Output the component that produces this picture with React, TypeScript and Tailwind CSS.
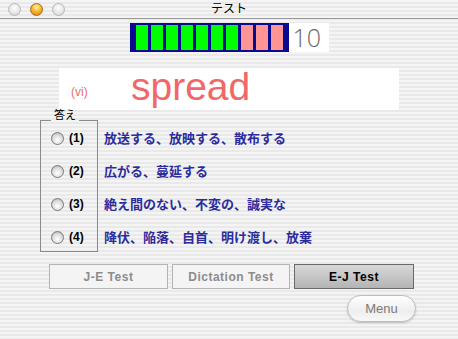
import React from 'react';

const stripes =
    'bg-[repeating-linear-gradient(180deg,#f4f4f4_0px,#f4f4f4_2px,#e9e9e9_2px,#e9e9e9_4px)]';

const answers = [
    '放送する、放映する、散布する',
    '広がる、蔓延する',
    '絶え間のない、不変の、誠実な',
    '降伏、陥落、自首、明け渡し、放棄',
];

function Light({ active }: { active?: boolean }) {
    return (
        <div
            className={
                active
                    ? 'w-[13px] h-[13px] rounded-full border border-[#b06a10] bg-[radial-gradient(circle_at_50%_30%,#fff3b0_0%,#f8b830_45%,#d87a10_100%)]'
                    : 'w-[13px] h-[13px] rounded-full border border-[#b8b8b8] bg-[radial-gradient(circle_at_50%_35%,#ffffff_0%,#e4e4e4_60%,#cfcfcf_100%)]'
            }
        />
    );
}

function Radio() {
    return (
        <div className="w-[13px] h-[13px] rounded-full border border-[#7a7a7a] bg-[radial-gradient(circle_at_50%_65%,#ffffff_0%,#dcdcdc_55%,#a8a8a8_100%)]" />
    );
}

export default function App() {
    const score = 7;
    return (
        <div className={`w-[458px] h-[339px] overflow-hidden ${stripes}`} style={{ fontFamily: '"Liberation Sans", "Noto Sans CJK JP", sans-serif' }}>
            {/* title bar */}
            <div className="relative h-[19px] border-b border-[#9a9a9a] flex items-center">
                <div className="flex items-center gap-[9px] pl-[8px]">
                    <Light />
                    <Light active />
                    <Light />
                </div>
                <div className="absolute inset-0 flex items-center justify-center text-[12px] text-black">
                    テスト
                </div>
            </div>

            {/* progress */}
            <div className="mt-[4px] flex justify-center">
                <div className="flex h-[29px] w-[159px] gap-[3px] bg-[#0a0a90] pl-[6px] py-[2px]">
                    {Array.from({ length: 10 }).map((_, i) => (
                        <div key={i} className={`w-[12px] h-full ${i < score ? 'bg-[#00ff00]' : 'bg-[#ff9494]'}`} />
                    ))}
                </div>
                <div className="w-[40px] h-[29px] bg-white text-[#6a6a6a] text-[25px] leading-[29px] pl-[4px]" style={{ fontFamily: '"Open Sans", sans-serif', fontWeight: 300 }}>
                    10
                </div>
            </div>

            {/* word */}
            <div className="mx-auto mt-[16px] w-[340px] h-[42px] bg-white flex items-center">
                <div className="ml-[12px] w-[60px] text-[12px] text-[#e87070] pt-[6px]">(vi)</div>
                <div className="text-[39px] leading-[42px] text-[#f06868] -mt-[4px]">spread</div>
            </div>

            {/* answers */}
            <div className="flex items-start pl-[40px]">
                <div className="w-[58px]">
                    <div className="flex items-end h-[11px]">
                        <div className="w-[11px] h-full border-b border-[#8a8a8a]" />
                        <div className="text-[11px] leading-[11px] px-[3px] text-black">答え</div>
                        <div className="flex-1 h-full border-b border-[#8a8a8a]" />
                    </div>
                    <div className="border-x border-b border-[#8a8a8a] pt-[6px] pb-[3px] flex flex-col gap-[11px]">
                        {answers.map((_, i) => (
                            <div key={i} className="h-[22px] flex items-center pl-[10px] gap-[5px]">
                                <Radio />
                                <span className="text-[12px] font-bold text-black">({i + 1})</span>
                            </div>
                        ))}
                    </div>
                </div>
                <div className="pl-[6px] pt-[17px] flex flex-col gap-[11px]">
                    {answers.map((a, i) => (
                        <div key={i} className="h-[22px] flex items-center text-[13px] font-bold text-[#2c2c9c]" style={{ fontFamily: '"Noto Sans CJK JP", sans-serif' }}>
                            {a}
                        </div>
                    ))}
                </div>
            </div>

            {/* test buttons */}
            <div className="mt-[12px] flex gap-[4px] pl-[49px]">
                <button className="w-[119px] h-[25px] border border-[#b4b4b4] bg-[#f4f4f4] text-[12px] font-bold text-[#8c8c8c] tracking-[0.5px]">
                    J-E Test
                </button>
                <button className="w-[118px] h-[25px] border border-[#b4b4b4] bg-[#f4f4f4] text-[12px] font-bold text-[#8c8c8c] tracking-[0.5px]">
                    Dictation Test
                </button>
                <button className="w-[120px] h-[25px] border border-[#6a6a6a] bg-[linear-gradient(180deg,#d8d8d8_0%,#b4b4b4_100%)] text-[12px] font-bold text-black tracking-[0.5px]">
                    E-J Test
                </button>
            </div>

            {/* menu */}
            <div className="mt-[6px] flex justify-end pr-[42px]">
                <button className="w-[69px] h-[27px] rounded-full border border-[#bcbcbc] bg-[linear-gradient(180deg,#ffffff_0%,#eeeeee_60%,#f8f8f8_100%)] shadow-[0_1px_2px_rgba(0,0,0,0.2)] text-[13px] text-[#7a7a7a]">
                    Menu
                </button>
            </div>
        </div>
    );
}
